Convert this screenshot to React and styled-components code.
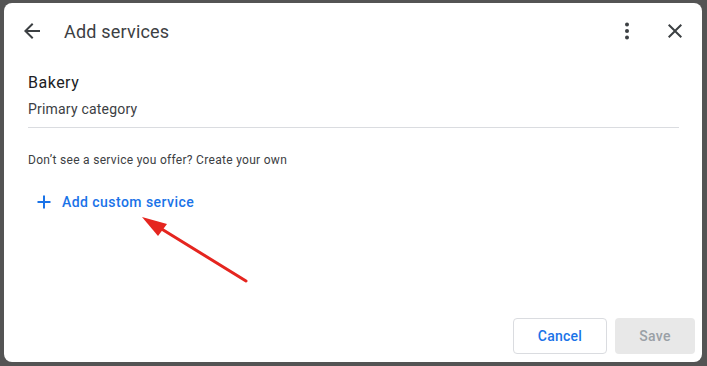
import React from "react";
import styled, { createGlobalStyle } from "styled-components";

const Global = createGlobalStyle`
  html, body { margin: 0; padding: 0; }
  body {
    background: #545454;
    font-family: Roboto, "Liberation Sans", Arial, sans-serif;
    overflow: hidden;
  }
`;

const Stage = styled.div`
  position: relative;
  width: 707px;
  height: 366px;
  padding: 3px 5px 4px 4px;
  box-sizing: border-box;
`;

const Dialog = styled.div`
  width: 698px;
  height: 359px;
  background: #fff;
  border-radius: 8px;
  display: flex;
  flex-direction: column;
  box-sizing: border-box;
`;

const Header = styled.div`
  height: 56px;
  display: flex;
  align-items: center;
  padding: 0 15px 0 16px;
  flex-shrink: 0;
`;

const IconButton = styled.button`
  width: 24px;
  height: 24px;
  padding: 0;
  border: 0;
  background: none;
  display: flex;
  align-items: center;
  justify-content: center;
  color: #3c4043;
  margin-left: ${(p) => p.$ml || 0}px;
  svg { width: 24px; height: 24px; fill: currentColor; }
`;

const Title = styled.h1`
  margin: 0 0 0 20px;
  font-size: 18px;
  font-weight: 400;
  color: #3c4043;
  flex: 1;
  letter-spacing: 0.2px;
`;

const Body = styled.div`
  flex: 1;
  padding: 13px 23px 0 24px;
  display: flex;
  flex-direction: column;
`;

const Category = styled.div`
  font-size: 16px;
  color: #202124;
  line-height: 22px;
  letter-spacing: 0.5px;
`;

const Sub = styled.div`
  font-size: 14px;
  color: #3c4043;
  line-height: 20px;
  margin-top: 5px;
  letter-spacing: 0.2px;
`;

const Divider = styled.hr`
  border: 0;
  border-top: 1px solid #dadce0;
  margin: 8px 0 0;
`;

const Hint = styled.p`
  margin: 24px 0 0;
  font-size: 12px;
  color: #3c4043;
  letter-spacing: 0.3px;
  line-height: 16px;
`;

const AddLink = styled.button`
  margin: 26px 0 0 8px;
  align-self: flex-start;
  border: 0;
  background: none;
  padding: 0;
  display: flex;
  align-items: center;
  gap: 10px;
  font-family: inherit;
  font-size: 14px;
  font-weight: 500;
  color: #1a73e8;
  letter-spacing: 0.45px;
  line-height: 16px;
  cursor: pointer;
  svg { width: 16px; height: 16px; }
`;

const Footer = styled.div`
  display: flex;
  justify-content: flex-end;
  gap: 8px;
  padding: 0 7px 8px 0;
`;

const Btn = styled.button`
  height: 36px;
  width: ${(p) => p.$w}px;
  border-radius: 4px;
  font-family: inherit;
  font-size: 14px;
  font-weight: 500;
  letter-spacing: 0.25px;
  border: ${(p) => (p.$primary ? "0" : "1px solid #dadce0")};
  background: ${(p) => (p.$primary ? "#e8e8e8" : "#fff")};
  color: ${(p) => (p.$primary ? "#9aa0a6" : "#1a73e8")};
`;

const Arrow = styled.svg`
  position: absolute;
  left: 0;
  top: 0;
  pointer-events: none;
`;

export default function App() {
  return (
    <>
      <Global />
      <Stage>
        <Dialog>
          <Header>
            <IconButton aria-label="Back">
              <svg viewBox="0 0 24 24">
                <path d="M20 11H7.83l5.59-5.59L12 4l-8 8 8 8 1.41-1.41L7.83 13H20v-2z" />
              </svg>
            </IconButton>
            <Title>Add services</Title>
            <IconButton aria-label="More">
              <svg viewBox="0 0 24 24">
                <circle cx="12" cy="5.5" r="2" />
                <circle cx="12" cy="12" r="2" />
                <circle cx="12" cy="18.5" r="2" />
              </svg>
            </IconButton>
            <IconButton aria-label="Close" $ml={24}>
              <svg viewBox="0 0 24 24">
                <path d="M19 6.41 17.59 5 12 10.59 6.41 5 5 6.41 10.59 12 5 17.59 6.41 19 12 13.41 17.59 19 19 17.59 13.41 12z" />
              </svg>
            </IconButton>
          </Header>
          <Body>
            <Category>Bakery</Category>
            <Sub>Primary category</Sub>
            <Divider />
            <Hint>Don’t see a service you offer? Create your own</Hint>
            <AddLink>
              <svg viewBox="0 0 16 16">
                <path d="M8 1.5v13M1.5 8h13" stroke="#1a73e8" strokeWidth="2" fill="none" />
              </svg>
              Add custom service
            </AddLink>
          </Body>
          <Footer>
            <Btn $w={94}>Cancel</Btn>
            <Btn $w={80} $primary>Save</Btn>
          </Footer>
        </Dialog>
        <Arrow width="707" height="366" viewBox="0 0 707 366">
          <line x1="246" y1="281" x2="160" y2="228" stroke="#e5251f" strokeWidth="3" strokeLinecap="round" />
          <polygon points="142,217 167,224 158,236" fill="#e5251f" />
        </Arrow>
      </Stage>
    </>
  );
}
